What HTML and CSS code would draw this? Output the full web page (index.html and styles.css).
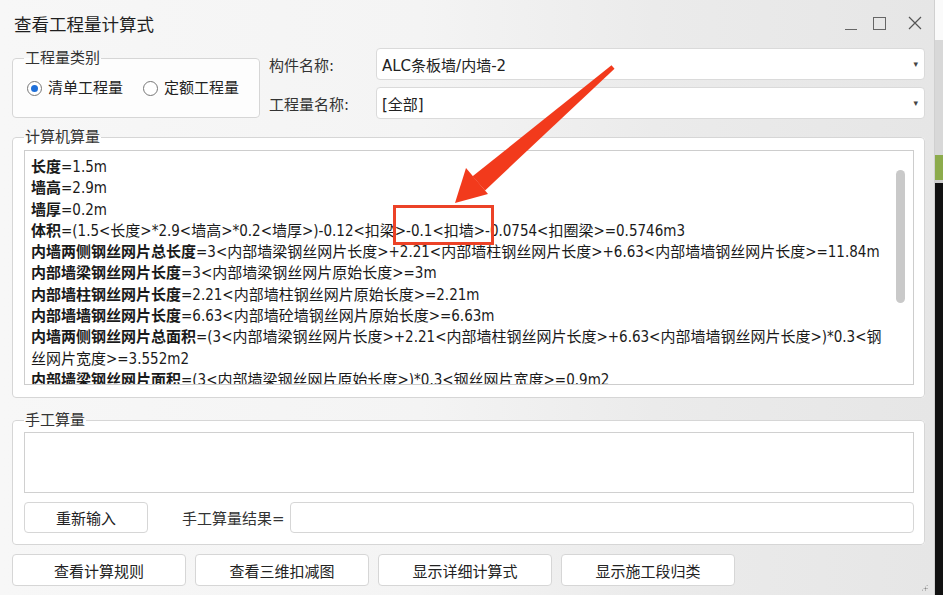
FILE: index.html
```html
<!DOCTYPE html>
<html lang="zh-CN">
<head>
    <meta charset="UTF-8">
    <title>查看工程量计算式</title>
    <link rel="stylesheet" href="styles.css">
</head>
<body>
    <div class="window">
        <!-- Title bar -->
        <div class="titlebar">
            <span class="title">查看工程量计算式</span>
            <div class="win-controls">
                <span class="btn-min"></span>
                <span class="btn-max"></span>
                <svg class="btn-close" width="14" height="14" viewBox="0 0 14 14">
                    <path d="M1 1 L13 13 M13 1 L1 13" stroke="#555" stroke-width="1.2" fill="none"/>
                </svg>
            </div>
        </div>

        <!-- Top row -->
        <div class="top-row">
            <fieldset class="group category">
                <legend>工程量类别</legend>
                <div class="radios">
                    <label class="radio checked"><span class="dot"></span>清单工程量</label>
                    <label class="radio"><span class="dot"></span>定额工程量</label>
                </div>
            </fieldset>

            <div class="fields">
                <span class="field-label">构件名称:</span>
                <div class="combo">ALC条板墙/内墙-2<span class="caret">▾</span></div>
                <span class="field-label">工程量名称:</span>
                <div class="combo">[全部]<span class="caret">▾</span></div>
            </div>
        </div>

        <!-- Computed quantities -->
        <fieldset class="group computed">
            <legend>计算机算量</legend>
            <div class="formula-box">
                <div class="formula-text">
                    <p><b>长度</b>=1.5m</p>
                    <p><b>墙高</b>=2.9m</p>
                    <p><b>墙厚</b>=0.2m</p>
                    <p><b>体积</b>=(1.5&lt;长度&gt;*2.9&lt;墙高&gt;*0.2&lt;墙厚&gt;)-0.12&lt;扣梁&gt;-0.1&lt;扣墙&gt;-0.0754&lt;扣圈梁&gt;=0.5746m3</p>
                    <p><b>内墙两侧钢丝网片总长度</b>=3&lt;内部墙梁钢丝网片长度&gt;+2.21&lt;内部墙柱钢丝网片长度&gt;+6.63&lt;内部墙墙钢丝网片长度&gt;=11.84m</p>
                    <p><b>内部墙梁钢丝网片长度</b>=3&lt;内部墙梁钢丝网片原始长度&gt;=3m</p>
                    <p><b>内部墙柱钢丝网片长度</b>=2.21&lt;内部墙柱钢丝网片原始长度&gt;=2.21m</p>
                    <p><b>内部墙墙钢丝网片长度</b>=6.63&lt;内部墙砼墙钢丝网片原始长度&gt;=6.63m</p>
                    <p><b>内墙两侧钢丝网片总面积</b>=(3&lt;内部墙梁钢丝网片长度&gt;+2.21&lt;内部墙柱钢丝网片长度&gt;+6.63&lt;内部墙墙钢丝网片长度&gt;)*0.3&lt;钢丝网片宽度&gt;=3.552m2</p>
                    <p><b>内部墙梁钢丝网片面积</b>=(3&lt;内部墙梁钢丝网片原始长度&gt;)*0.3&lt;钢丝网片宽度&gt;=0.9m2</p>
                </div>
                <div class="scrollbar"><span class="thumb"></span></div>
            </div>
        </fieldset>

        <!-- Manual quantities -->
        <fieldset class="group manual">
            <legend>手工算量</legend>
            <div class="manual-input"></div>
            <div class="manual-row">
                <button class="btn reset">重新输入</button>
                <span class="result-label">手工算量结果=</span>
                <div class="result-input"></div>
            </div>
        </fieldset>

        <!-- Bottom buttons -->
        <div class="actions">
            <button class="btn">查看计算规则</button>
            <button class="btn">查看三维扣减图</button>
            <button class="btn">显示详细计算式</button>
            <button class="btn">显示施工段归类</button>
        </div>

        <span class="grip"></span>
    </div>
    <div class="desk"></div>

    <!-- Annotation -->
    <svg class="annotation" width="943" height="595" viewBox="0 0 943 595">
        <polygon points="472.6,176.3 485,190.4 614.5,68.8 611.5,65.2" fill="#f23a1c"/>
        <polygon points="455,203 466,168 488,194" fill="#f23a1c"/>
        <rect x="394.5" y="206.5" width="98" height="37" fill="none" stroke="#ec4227" stroke-width="3"/>
    </svg>
</body>
</html>
```

FILE: styles.css
```css
/* General */
body {
    margin: 0;
    width: 943px;
    height: 595px;
    display: flex;
    overflow: hidden;
    font-family: "DejaVu Sans", "Noto Sans CJK SC", sans-serif;
    font-size: 15px;
    color: #222;
    position: relative;
}

.window {
    width: 935px;
    height: 595px;
    box-sizing: border-box;
    border-right: 1px solid #d0d0d0;
    background: linear-gradient(90deg, #f7f7f7 0%, #f4f4f4 45%, #ebebeb 70%, #e6e6e6 100%);
    position: relative;
}

.desk {
    flex: 1;
    background: linear-gradient(180deg, #fafafa 0 40px, #d8d8d8 40px 155px, #8cab4c 155px 180px, #cfcfcf 180px 183px, #111 183px);
}

/* Title bar */
.titlebar {
    height: 46px;
    display: flex;
    align-items: center;
    padding-left: 14px;
}

.title {
    font-size: 17.5px;
    color: #1f1f1f;
}

.win-controls {
    margin-left: auto;
    display: flex;
    align-items: center;
    margin-right: 12px;
}

.btn-min {
    width: 12px;
    height: 1px;
    background: #666;
    margin-top: 12px;
    margin-right: 16px;
}

.btn-max {
    width: 11px;
    height: 11px;
    border: 1px solid #666;
    margin-right: 22px;
}

/* Group boxes */
.group {
    margin: 0;
    border: 1px solid #d6d6d6;
    border-radius: 4px;
    background: #fdfdfd;
    box-sizing: border-box;
}

.group legend {
    padding: 0 1px;
    margin-left: 0;
    line-height: 20px;
    color: #333;
}

/* Top row */
.top-row {
    display: flex;
    padding-left: 12px;
    padding-top: 2px;
}

.category {
    width: 248px;
    height: 70px;
    padding: 10px 0 0 11px;
}

.radios {
    display: flex;
    gap: 20px;
    margin-left: 3px;
}

.radio {
    display: flex;
    align-items: center;
    gap: 6px;
    line-height: 20px;
    color: #222;
}

.dot {
    width: 13px;
    height: 13px;
    border: 1px solid #777;
    border-radius: 50%;
    display: flex;
    align-items: center;
    justify-content: center;
    background: #fff;
}

.radio.checked .dot::after {
    content: "";
    width: 7px;
    height: 7px;
    border-radius: 50%;
    background: #1e6fd9;
}

.fields {
    display: grid;
    grid-template-columns: 107px 549px;
    row-gap: 7px;
    margin-left: 9px;
    align-items: center;
}

.field-label {
    color: #333;
}

.combo {
    height: 32px;
    box-sizing: border-box;
    border: 1px solid #dadada;
    border-radius: 4px;
    background: #fff;
    padding-left: 5px;
    display: flex;
    align-items: center;
    color: #222;
}

.caret {
    margin-left: auto;
    margin-right: 6px;
    font-size: 9px;
    color: #444;
}

/* Computed */
.computed {
    margin: 8px 0 0 12px;
    width: 913px;
    padding: 3px 10px 12px 11px;
    background: #fff;
}

.formula-box {
    height: 235px;
    box-sizing: border-box;
    border: 1px solid #cdcdcd;
    background: #fff;
    display: flex;
    overflow: hidden;
}

.formula-text {
    flex: 1;
    padding: 6px 8px 0 6px;
    font-family: "DejaVu Sans Condensed", "DejaVu Sans", "Noto Sans CJK SC", sans-serif;
    font-stretch: condensed;
    font-size: 15px;
    line-height: 21.3px;
    color: #1a1a1a;
}

.formula-text p {
    margin: 0;
}

.formula-text b {
    font-weight: bold;
}

.scrollbar {
    width: 14px;
    padding-top: 19px;
    margin-right: 3px;
}

.thumb {
    display: block;
    width: 9px;
    height: 133px;
    border-radius: 5px;
    background: #c9c9c9;
}

/* Manual */
.manual {
    margin: 12px 0 0 12px;
    width: 913px;
    height: 135px;
    padding: 2px 10px 0 11px;
    background: #fff;
}

.manual-input {
    height: 61px;
    box-sizing: border-box;
    border: 1px solid #d0d0d0;
    background: #fff;
}

.manual-row {
    display: flex;
    align-items: center;
    margin-top: 9px;
}

.btn {
    font-family: inherit;
    font-size: 15px;
    color: #222;
    background: #fff;
    border: 1px solid #d6d6d6;
    border-radius: 4px;
    height: 32px;
    padding: 0;
}

.reset {
    width: 124px;
    height: 31px;
}

.result-label {
    margin-left: 34px;
    width: 108px;
    color: #333;
}

.result-input {
    flex: 1;
    height: 31px;
    box-sizing: border-box;
    border: 1px solid #d6d6d6;
    border-radius: 4px;
    background: #fff;
}

/* Bottom buttons */
.actions {
    display: flex;
    gap: 9px;
    margin: 9px 0 0 12px;
}

.actions .btn {
    width: 174px;
}

.grip {
    position: absolute;
    right: 6px;
    bottom: 4px;
    width: 7px;
    height: 7px;
    background: radial-gradient(circle, #888 0.8px, transparent 1.2px) 0 0 / 3px 3px;
    clip-path: polygon(100% 0, 100% 100%, 0 100%);
}

.annotation {
    position: absolute;
    top: 0;
    left: 0;
    pointer-events: none;
}
```
